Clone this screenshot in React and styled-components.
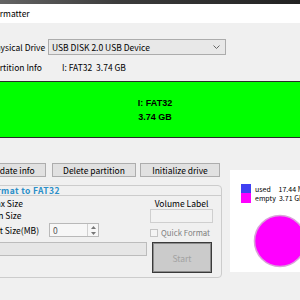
import styled, { createGlobalStyle } from "styled-components";

const Global = createGlobalStyle`
  html, body {
    margin: 0;
    padding: 0;
    width: 300px;
    height: 300px;
    overflow: hidden;
    background: #f0f0f0;
  }
  body {
    font-family: "Noto Sans CJK JP", "Liberation Sans", sans-serif;
    font-size: 8.5px;
    color: #000;
  }
`;

const Window = styled.div`
  width: 370px;
  height: 300px;
  margin-left: -30px;
  display: flex;
  flex-direction: column;
`;

const TopEdge = styled.div`
  height: 4px;
  background: linear-gradient(90deg, #6e6e6e, #3c3c3c 40%, #1c1c1c);
`;

const TitleBar = styled.div`
  height: 19px;
  line-height: 19px;
  padding-left: 20px;
  background: #fff;
`;

const Panel = styled.div`
  padding-top: 16px;
  display: flex;
  flex-direction: column;
`;

const Row = styled.div`
  display: flex;
  align-items: center;
  height: ${(p) => p.h || 16}px;
  margin-top: ${(p) => p.mt || 0}px;
  padding-left: 20px;
`;

const Label = styled.div`
  width: 58px;
  flex: none;
  white-space: nowrap;
`;

const Select = styled.div`
  width: 178px;
  height: 16px;
  box-sizing: border-box;
  border: 1px solid #acacac;
  background: #e8e8e8;
  display: flex;
  align-items: center;
  justify-content: space-between;
  padding: 0 5px 0 3px;
`;

const Value = styled.div`
  margin-left: 14px;
  white-space: pre;
`;

const GreenBar = styled.div`
  margin-top: 7px;
  height: 57px;
  box-sizing: border-box;
  border-top: 1px solid #2a2a2a;
  border-bottom: 1px solid #2a2a2a;
  background: #00ff00;
  display: flex;
  flex-direction: column;
  align-items: center;
  justify-content: center;
  font-family: "Liberation Sans", Arial, sans-serif;
  font-weight: bold;
  font-size: 9px;
  line-height: 14px;
`;

const Bottom = styled.div`
  display: flex;
  margin-top: 25px;
`;

const LeftCol = styled.div`
  margin-left: 7px;
  width: 245px;
  display: flex;
  flex-direction: column;
`;

const ButtonRow = styled.div`
  display: flex;
  height: 14px;
`;

const Button = styled.button`
  width: ${(p) => p.w}px;
  margin-left: ${(p) => p.ml || 0}px;
  height: 14px;
  padding: 0;
  border: 1px solid #adadad;
  background: #e1e1e1;
  font-family: inherit;
  font-size: 8.5px;
  line-height: 12px;
  color: #000;
`;

const Group = styled.div`
  margin-top: 8px;
  height: 93px;
  box-sizing: border-box;
  border: 1px solid #cccccc;
  border-radius: 4px;
  display: flex;
  flex-direction: column;
`;

const GroupTitle = styled.div`
  height: 9px;
  line-height: 9px;
  border-bottom: 1px solid #cccccc;
  padding-left: 8px;
  font-weight: bold;
  font-size: 8.5px;
  color: #2b8fc9;
  letter-spacing: 0.4px;
`;

const GroupBody = styled.div`
  display: flex;
  gap: 3px;
  padding: 1px 7px 0 11px;
`;

const Column = styled.div`
  width: ${(p) => p.w}px;
  display: flex;
  flex-direction: column;
`;

const Line = styled.div`
  height: 12px;
  line-height: 12px;
  white-space: nowrap;
  text-align: ${(p) => p.align || "left"};
`;

const SpinRow = styled.div`
  display: flex;
  align-items: center;
  margin-top: 2px;
  height: 14px;
`;

const SpinLabel = styled.div`
  width: 60px;
  margin-left: -3px;
  margin-right: 3px;
  white-space: nowrap;
`;

const SpinBox = styled.div`
  width: 50px;
  height: 14px;
  box-sizing: border-box;
  border: 1px solid #b9b9b9;
  background: #f7f7f7;
  display: flex;
`;

const SpinText = styled.div`
  flex: 1;
  padding-left: 3px;
  line-height: 12px;
  color: #555;
`;

const SpinArrows = styled.div`
  width: 10px;
  border-left: 1px solid #d0d0d0;
  display: flex;
  flex-direction: column;
  align-items: center;
  justify-content: space-around;
`;

const Progress = styled.div`
  margin-top: 5px;
  height: 14px;
  box-sizing: border-box;
  border: 1px solid #bcbcbc;
  background: #e6e6e6;
`;

const TextField = styled.div`
  height: 14px;
  box-sizing: border-box;
  border: 1px solid #cfcfcf;
  background: #f2f2f2;
`;

const CheckRow = styled.div`
  display: flex;
  align-items: center;
  margin-top: 5px;
  height: 9px;
`;

const Check = styled.div`
  width: 8px;
  height: 8px;
  flex: none;
  box-sizing: border-box;
  border: 1px solid #c4c4c4;
  background: #f4f4f4;
`;

const CheckLabel = styled.div`
  margin-left: 3px;
  font-size: 7.8px;
  color: #808080;
  white-space: nowrap;
`;

const StartButton = styled.button`
  margin: 5px 0 0 2px;
  width: 60px;
  height: 31px;
  box-sizing: border-box;
  border: 1px solid #3a3a3a;
  box-shadow: inset 0 0 0 1px #8c8c8c;
  background: #cbcbcb;
  color: #a2a2a2;
  font-family: inherit;
  font-size: 8.5px;
  padding: 0;
`;

const PiePanel = styled.div`
  margin: 7px 0 0 8px;
  width: 100px;
  height: 102px;
  background: #fff;
  display: flex;
  flex-direction: column;
  padding: 14px 0 0 11px;
  box-sizing: border-box;
`;

const LegendRow = styled.div`
  display: flex;
  align-items: center;
  height: ${(p) => p.h}px;
`;

const Swatch = styled.div`
  width: 10px;
  height: 100%;
  background: ${(p) => p.color};
`;

const LegendText = styled.div`
  margin-left: 4px;
  font-size: 7px;
  white-space: pre;
`;

const Pie = styled.svg`
  margin: 11px 0 0 12px;
`;

export default function App() {
  return (
    <>
      <Global />
      <Window>
        <TopEdge />
        <TitleBar>Formatter</TitleBar>
        <Panel>
          <Row>
            <Label>Physical Drive</Label>
            <Select>
              <span>USB DISK 2.0 USB Device</span>
              <svg width="7" height="4" viewBox="0 0 7 4">
                <path d="M0.5 0.5 L3.5 3.5 L6.5 0.5" fill="none" stroke="#666" strokeWidth="1" />
              </svg>
            </Select>
          </Row>
          <Row h={14} mt={5}>
            <Label>Partition Info</Label>
            <Value>{"I: FAT32  3.74 GB"}</Value>
          </Row>
          <GreenBar>
            <div>I: FAT32</div>
            <div>3.74 GB</div>
          </GreenBar>
          <Bottom>
            <LeftCol>
              <ButtonRow>
                <Button w={69}>Update info</Button>
                <Button w={84} ml={6}>Delete partition</Button>
                <Button w={80} ml={4}>Initialize drive</Button>
              </ButtonRow>
              <Group>
                <GroupTitle>Format to FAT32</GroupTitle>
                <GroupBody>
                  <Column w={158}>
                    <Line>Max Size</Line>
                    <Line>Min Size</Line>
                    <SpinRow>
                      <SpinLabel>Unit Size(MB)</SpinLabel>
                      <SpinBox>
                        <SpinText>0</SpinText>
                        <SpinArrows>
                          <svg width="5" height="3" viewBox="0 0 5 3">
                            <path d="M0 3 L2.5 0 L5 3 Z" fill="#777" />
                          </svg>
                          <svg width="5" height="3" viewBox="0 0 5 3">
                            <path d="M0 0 L2.5 3 L5 0 Z" fill="#777" />
                          </svg>
                        </SpinArrows>
                      </SpinBox>
                    </SpinRow>
                    <Progress />
                  </Column>
                  <Column w={63}>
                    <Line align="center">Volume Label</Line>
                    <TextField />
                    <CheckRow>
                      <Check />
                      <CheckLabel>Quick Format</CheckLabel>
                    </CheckRow>
                    <StartButton>Start</StartButton>
                  </Column>
                </GroupBody>
              </Group>
            </LeftCol>
            <PiePanel>
              <LegendRow h={9}>
                <Swatch color="#4040f2" />
                <LegendText>{"used     17.44 MB"}</LegendText>
              </LegendRow>
              <LegendRow h={10}>
                <Swatch color="#ff00ff" />
                <LegendText>{"empty  3.71 GB"}</LegendText>
              </LegendRow>
              <Pie width="54" height="54" viewBox="0 0 54 54">
                <circle cx="27" cy="27" r="25.5" fill="#ff00ff" stroke="#d9a3d9" strokeWidth="1.6" />
              </Pie>
            </PiePanel>
          </Bottom>
        </Panel>
      </Window>
    </>
  );
}
